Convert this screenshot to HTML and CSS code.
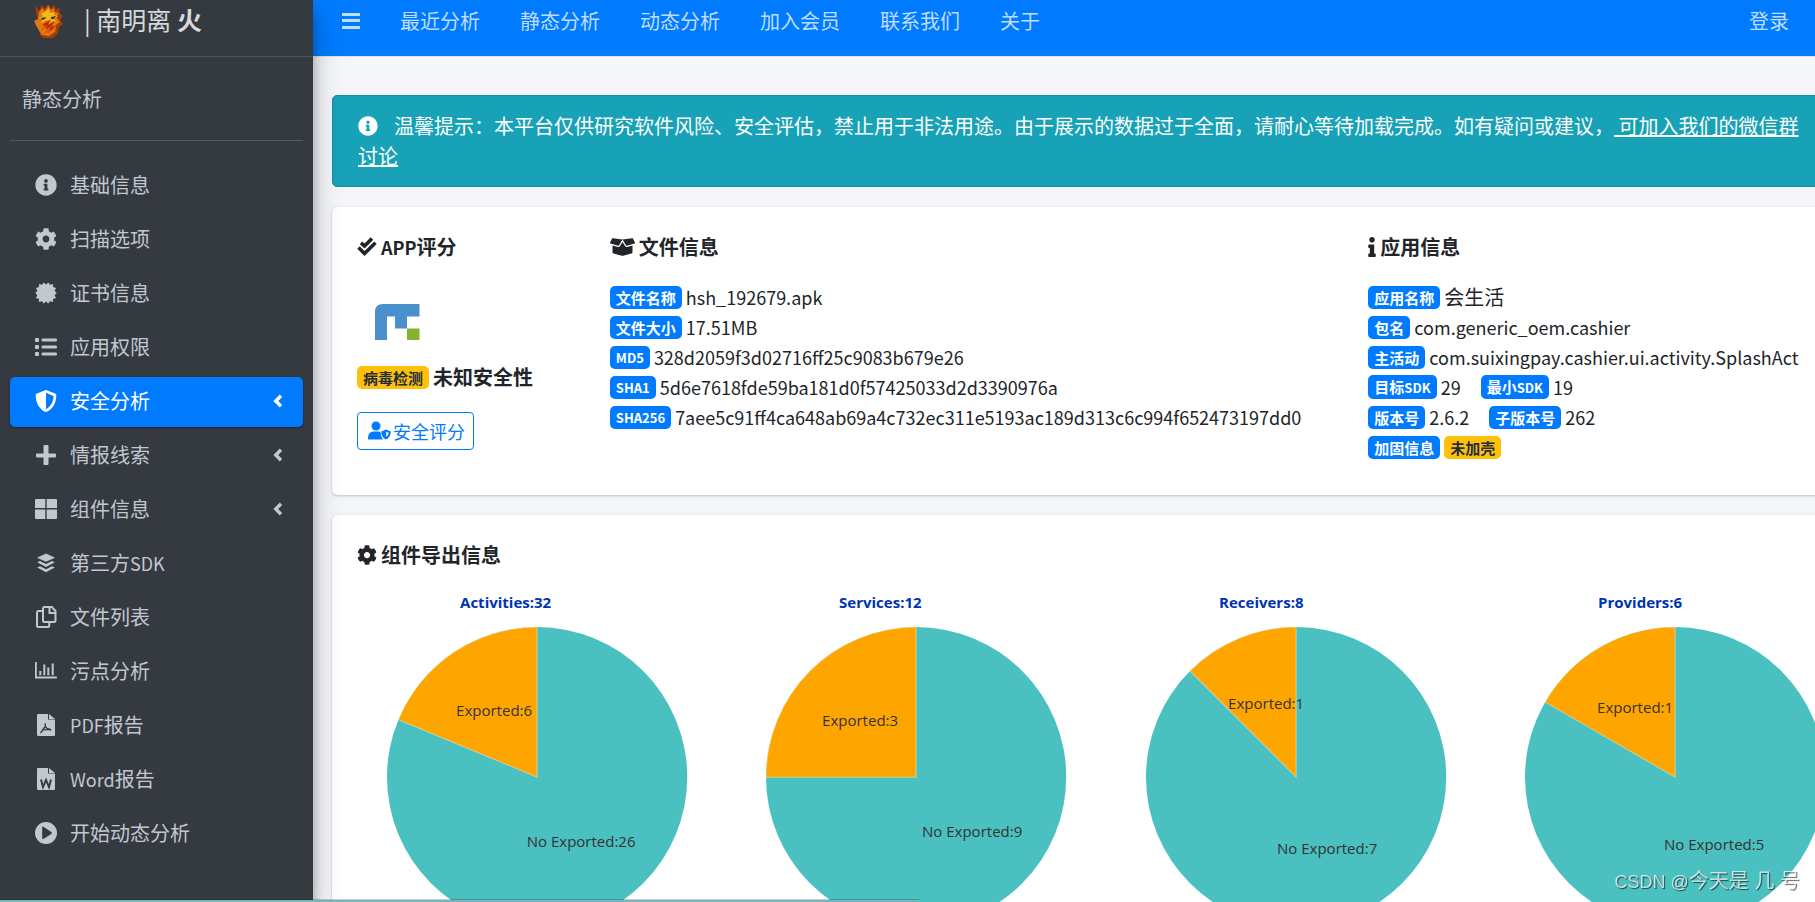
FILE: index.html
```html
<!DOCTYPE html>
<html lang="zh-CN">
<head>
<meta charset="utf-8">
<title>南明离火 - 静态分析</title>
<link rel="stylesheet" href="styles.css">
</head>
<body>
<svg class="sprite" aria-hidden="true">
  <symbol id="i-info" viewBox="0 0 512 512"><path d="M256 8C119.043 8 8 119.083 8 256c0 136.997 111.043 248 248 248s248-111.003 248-248C504 119.083 392.957 8 256 8zm0 110c23.196 0 42 18.804 42 42s-18.804 42-42 42-42-18.804-42-42 18.804-42 42-42zm56 254c0 6.627-5.373 12-12 12h-88c-6.627 0-12-5.373-12-12v-24c0-6.627 5.373-12 12-12h12v-64h-12c-6.627 0-12-5.373-12-12v-24c0-6.627 5.373-12 12-12h64c6.627 0 12 5.373 12 12v100h12c6.627 0 12 5.373 12 12v24z"/></symbol>
  <symbol id="i-cog" viewBox="0 0 512 512"><path d="M487.4 315.7l-42.6-24.6c4.3-23.2 4.3-47 0-70.2l42.6-24.6c4.9-2.8 7.1-8.6 5.5-14-11.1-35.6-30-67.8-54.7-94.6-3.8-4.1-10-5.1-14.8-2.3L380.8 110c-17.9-15.4-38.5-27.3-60.8-35.1V25.8c0-5.6-3.9-10.5-9.4-11.7-36.7-8.2-74.3-7.8-109.2 0-5.5 1.2-9.4 6.1-9.4 11.7V75c-22.2 7.9-42.8 19.8-60.8 35.1L88.7 85.5c-4.9-2.8-11-1.9-14.8 2.3-24.7 26.7-43.6 58.9-54.7 94.6-1.7 5.4.6 11.2 5.5 14L67.3 221c-4.3 23.2-4.3 47 0 70.2l-42.6 24.6c-4.9 2.8-7.1 8.6-5.5 14 11.1 35.6 30 67.8 54.7 94.6 3.8 4.1 10 5.1 14.8 2.3l42.6-24.6c17.9 15.4 38.5 27.3 60.8 35.1v49.2c0 5.6 3.9 10.5 9.4 11.7 36.7 8.2 74.3 7.8 109.2 0 5.5-1.2 9.4-6.1 9.4-11.7v-49.2c22.2-7.9 42.8-19.8 60.8-35.1l42.6 24.6c4.9 2.8 11 1.9 14.8-2.3 24.7-26.7 43.6-58.9 54.7-94.6 1.5-5.5-.7-11.3-5.6-14.1zM256 336c-44.1 0-80-35.9-80-80s35.9-80 80-80 80 35.9 80 80-35.9 80-80 80z"/></symbol>
  <symbol id="i-seal" viewBox="-12 -12 24 24"><path d="M2.500-11.500 4.400-8.900 7.700-9.700 7.700-6.500 11-5.400 9.400-2.500 11.700 0 9.400 2.500 11 5.400 7.700 6.500 7.700 9.700 4.400 8.900 2.500 11.500 0 9.400-2.500 11.500-4.400 8.900-7.700 9.700-7.700 6.500-11 5.400-9.400 2.500-11.700 0-9.400-2.500-11-5.400-7.700-6.500-7.700-9.700-4.400-8.900-2.500-11.500 0-9.400z"/></symbol>
  <symbol id="i-list" viewBox="0 0 22 22"><path d="M1 2h2q1 0 1 1v2q0 1-1 1H1Q0 6 0 5V3q0-1 1-1zM1 9h2q1 0 1 1v2q0 1-1 1H1q-1 0-1-1v-2q0-1 1-1zM1 16h2q1 0 1 1v2q0 1-1 1H1q-1 0-1-1v-2q0-1 1-1zM7.500 2.500h13.500q1 0 1 1.500t-1 1.500H7.500q-1 0-1-1.500t1-1.500zM7.500 9.500h13.500q1 0 1 1.500t-1 1.500H7.500q-1 0-1-1.500t1-1.500zM7.500 16.500h13.500q1 0 1 1.500t-1 1.500H7.500q-1 0-1-1.500t1-1.500z"/></symbol>
  <symbol id="i-shield" viewBox="0 0 512 512"><path d="M466.500 83.700l-192-80a48.150 48.150 0 0 0-36.900 0l-192 80C27.700 91.100 16 108.600 16 128c0 198.500 114.500 335.700 221.500 380.300 11.800 4.900 25.100 4.900 36.900 0C360.100 472.600 496 349.300 496 128c0-19.400-11.700-36.900-29.500-44.300zM256.100 446.300l-.1-381 175.900 73.300c-3.300 151.400-82.100 261.100-175.800 307.700z"/></symbol>
  <symbol id="i-plus" viewBox="0 0 22 22"><path d="M9.500 1h3q1 0 1 1v7.500H20q1 0 1 1v2q0 1-1 1h-6.500V20q0 1-1 1h-3q-1 0-1-1v-6.500H2q-1 0-1-1v-2q0-1 1-1h6.500V2q0-1 1-1z"/></symbol>
  <symbol id="i-grid" viewBox="0 0 22 22"><path d="M1 1h9.300v9H0V2q0-1 1-1zM11.700 1H21q1 0 1 1v8H11.700zM0 11.500h10.300V21H1q-1 0-1-1zM11.700 11.500H22V20q0 1-1 1h-9.300z"/></symbol>
  <symbol id="i-layers" viewBox="0 0 22 22"><path d="M11 1.500 20 5.700 11 9.800 2 5.700z"/><path d="M2.200 10.200 5 9.100 11 12l6-2.900 2.800 1.100L11 15zM2.200 15.500 5 14.300l6 2.900 6-2.900 2.800 1.200L11 20.300z"/></symbol>
  <symbol id="i-copy" viewBox="0 0 22 22"><path d="M9.500 1h7.300L20.500 5v9.500q0 1.500-1.500 1.500H9.500Q8 16 8 14.500v-12Q8 1 9.500 1zM8 5H3.200Q2 5 2 6.500v13Q2 21 3.500 21h9q1.800 0 1.800-1.800V16M14.500 1v6H20" fill="none" stroke="currentColor" stroke-width="2"/></symbol>
  <symbol id="i-chart" viewBox="0 0 22 22"><path d="M.9 2v15.500h21" fill="none" stroke="currentColor" stroke-width="1.800"/><path d="M4.300 11h2v4.200h-2zM8.300 4.500h2v10.700h-2zM12.300 7.500h2v7.700h-2zM16.700 3.500h2v11.700h-2z"/></symbol>
  <symbol id="i-pdf" viewBox="0 0 22 22"><path d="M3 0h10v5.500h7V21q0 1-1 1H3.500Q2 22 2 21V1q0-1 1-1z"/><path d="M14 0l6 5h-6z"/><path d="M10.300 9.200v3.300L5.500 19M10.300 12.500q1.700 3 6 3.500M8 15.800l8-.5" fill="none" stroke="#343a40" stroke-width="1.300"/></symbol>
  <symbol id="i-word" viewBox="0 0 22 22"><path d="M3 0h10v5.500h7V21q0 1-1 1H3.500Q2 22 2 21V1q0-1 1-1z"/><path d="M14 0l6 5h-6z"/><path d="M6 11.500l2 7.500 3-7 3 7 2-7.500" fill="none" stroke="#343a40" stroke-width="1.900"/></symbol>
  <symbol id="i-play" viewBox="0 0 22 22"><path fill-rule="evenodd" d="M11 0a11 11 0 1 0 0 22 11 11 0 0 0 0-22zM7.200 5.500q0-1.300 1.200-.7L16.300 10q1.300 1 0 1.900l-7.900 5q-1.200.6-1.200-.8z"/></symbol>
  <symbol id="i-left" viewBox="0 0 10 14"><path d="M8 1.800 2.800 7 8 12.200" fill="none" stroke="currentColor" stroke-width="3.400"/></symbol>
  <symbol id="i-bars" viewBox="0 0 20 20"><path d="M1 2h18v3H1zM1 8h18v3H1zM1 15h18v3H1z"/></symbol>
  <symbol id="i-checks" viewBox="0 0 20 20"><path d="M4 5.800 7.500 9 15 1.500M1.500 10.500 7.500 16.500 18.500 5.800" fill="none" stroke="currentColor" stroke-width="3.600"/></symbol>
  <symbol id="i-box" viewBox="0 0 640 512"><path d="M425.700 256c-16.900 0-32.800-9-41.400-23.400L320 126l-64.200 106.600c-8.700 14.500-24.600 23.500-41.500 23.500-4.500 0-9-.6-13.300-1.900L64 215v178c0 14.700 10 27.500 24.200 31l216.200 54.100c10.200 2.500 20.900 2.500 31 0L551.800 424c14.200-3.600 24.200-16.400 24.200-31V215l-137 39.100c-4.300 1.300-8.800 1.900-13.300 1.900zm212.600-112.200L586.800 41c-3.100-6.200-9.800-9.800-16.700-8.900L320 64l91.700 152.100c3.800 6.300 11.400 9.300 18.500 7.300l197.900-56.500c9.900-2.900 14.700-13.900 10.200-23.100zM53.200 41L1.700 143.800c-4.600 9.200.3 20.200 10.100 23l197.900 56.500c7.100 2 14.700-1 18.500-7.300L320 64 69.800 32.100c-6.900-.8-13.500 2.700-16.600 8.900z"/></symbol>
  <symbol id="i-i" viewBox="0 0 192 512"><path d="M20 424.229h20V279.771H20c-11.046 0-20-8.954-20-20V212c0-11.046 8.954-20 20-20h112c11.046 0 20 8.954 20 20v212.229h20c11.046 0 20 8.954 20 20V492c0 11.046-8.954 20-20 20H20c-11.046 0-20-8.954-20-20v-47.771c0-11.046 8.954-20 20-20zM96 0C56.235 0 24 32.235 24 72s32.235 72 72 72 72-32.235 72-72S135.764 0 96 0z"/></symbol>
  <symbol id="i-user" viewBox="0 0 23 20"><circle cx="8" cy="5" r="4.500"/><path d="M0 18q-.2-7.500 5.500-7.500h5q1.200 0 2 .5 0 4.500 2.500 7.500H1Q0 18.500 0 18z"/><path fill-rule="evenodd" d="M18 8.500l4.700 1.900q.3 5.600-4.700 8.100-5-2.500-4.700-8.100zM18.200 10.800v5.300q2.400-1.600 2.500-4.300z"/></symbol>
</svg>

<div class="app">
  <aside class="sidebar">
    <a class="brand" href="#">
      <svg class="brand-logo" viewBox="0 0 30 34" aria-hidden="true">
        <path fill="#a63c0c" d="M2 8 1 2l5 5 1-6 4 3 3-4 2 4 5-3 0 5 5-3-1 6 4 3-3 4 3 4-4 3-1 6-5 5-8 1-5-4-1-6-4-5 3-3z"/>
        <path fill="#e07a0c" d="M5 8 8 4l3 3 4-6 1 5 5-2-1 4 5 1-3 4 4 5-4 3-1 7-6 4-7-1-4-6-4-8 4-2z"/>
        <path fill="#eebb1c" d="M7 9l4-1 4-4 1 5 5-1-1 3 4 1-4 3 3 3-5-1-3 3-2-4-6 3 2-4-4-1 4-2z"/>
        <path fill="#c22b0d" d="M8 21l9-6-3 6 7-4-4 6 5-2-7 9-6-1 4-5-6 3 4-5z"/>
        <path fill="#f7b617" d="M9 25l4-4-1 5 5-4-2 5 4-1-5 5-5-2z" opacity=".4"/>
        <path fill="#4d3410" d="M7 14l5-1-1 2-3 1zM17 13l5-1-2 3-3 0z"/>
      </svg>
      <span class="brand-text">| 南明离 <b>火</b></span>
    </a>
    <div class="side-body">
      <div class="side-title"><a href="#">静态分析</a></div>
      <nav class="menu">
        <a href="#"><svg class="ico"><use href="#i-info"/></svg><span>基础信息</span></a>
        <a href="#"><svg class="ico"><use href="#i-cog"/></svg><span>扫描选项</span></a>
        <a href="#"><svg class="ico"><use href="#i-seal"/></svg><span>证书信息</span></a>
        <a href="#"><svg class="ico"><use href="#i-list"/></svg><span>应用权限</span></a>
        <a href="#" class="active"><svg class="ico"><use href="#i-shield"/></svg><span>安全分析</span><svg class="chev"><use href="#i-left"/></svg></a>
        <a href="#"><svg class="ico"><use href="#i-plus"/></svg><span>情报线索</span><svg class="chev"><use href="#i-left"/></svg></a>
        <a href="#"><svg class="ico"><use href="#i-grid"/></svg><span>组件信息</span><svg class="chev"><use href="#i-left"/></svg></a>
        <a href="#"><svg class="ico"><use href="#i-layers"/></svg><span>第三方<span class="latin">SDK</span></span></a>
        <a href="#"><svg class="ico"><use href="#i-copy"/></svg><span>文件列表</span></a>
        <a href="#"><svg class="ico"><use href="#i-chart"/></svg><span>污点分析</span></a>
        <a href="#"><svg class="ico"><use href="#i-pdf"/></svg><span><span class="latin">PDF</span>报告</span></a>
        <a href="#"><svg class="ico"><use href="#i-word"/></svg><span><span class="latin">Word</span>报告</span></a>
        <a href="#"><svg class="ico"><use href="#i-play"/></svg><span>开始动态分析</span></a>
      </nav>
    </div>
  </aside>

  <div class="page">
    <header class="topbar">
      <button class="toggle" type="button" aria-label="菜单"><svg><use href="#i-bars"/></svg></button>
      <nav class="topnav">
        <a href="#">最近分析</a><a href="#">静态分析</a><a href="#">动态分析</a><a href="#">加入会员</a><a href="#">联系我们</a><a href="#">关于</a>
      </nav>
      <a class="login" href="#">登录</a>
    </header>

    <main class="content">
      <div class="alert">
        <svg class="alert-ico"><use href="#i-info"/></svg>温馨提示：本平台仅供研究软件风险、安全评估，禁止用于非法用途。由于展示的数据过于全面，请耐心等待加载完成。如有疑问或建议，<a href="#">&nbsp;可加入我们的微信群讨论</a>
      </div>

      <section class="card summary">
        <div class="score">
          <h2><svg class="h-ico"><use href="#i-checks"/></svg><span><span class="latin">APP</span>评分</span></h2>
          <svg class="app-icon" viewBox="0 0 80 80" aria-hidden="true">
            <path fill="#4a90cd" d="M18 58V30q0-8 8-8h36.500v12.500H50v12H38v-12h-8V58z"/>
            <path fill="#86b32d" d="M50 46.500h12.500V58H50z"/>
          </svg>
          <p class="verdict"><span class="badge warn">病毒检测</span><b>未知安全性</b></p>
          <button class="score-btn" type="button"><svg><use href="#i-user"/></svg>安全评分</button>
        </div>
        <div class="files">
          <h2><svg class="h-ico wide"><use href="#i-box"/></svg><span>文件信息</span></h2>
          <p><span class="badge">文件名称</span><span class="latin">hsh_192679.apk</span></p>
          <p><span class="badge">文件大小</span><span class="latin">17.51MB</span></p>
          <p><span class="badge en">MD5</span><span class="latin">328d2059f3d02716ff25c9083b679e26</span></p>
          <p><span class="badge en">SHA1</span><span class="latin">5d6e7618fde59ba181d0f57425033d2d3390976a</span></p>
          <p><span class="badge en">SHA256</span><span class="latin">7aee5c91ff4ca648ab69a4c732ec311e5193ac189d313c6c994f652473197dd0</span></p>
        </div>
        <div class="info">
          <h2><svg class="h-ico thin"><use href="#i-i"/></svg><span>应用信息</span></h2>
          <p><span class="badge">应用名称</span><span>会生活</span></p>
          <p><span class="badge">包名</span><span class="latin">com.generic_oem.cashier</span></p>
          <p><span class="badge">主活动</span><span class="latin">com.suixingpay.cashier.ui.activity.SplashAct</span></p>
          <p><span class="badge">目标<span class="en">SDK</span></span><span class="latin first">29</span><span class="badge">最小<span class="en">SDK</span></span><span class="latin">19</span></p>
          <p><span class="badge">版本号</span><span class="latin first">2.6.2</span><span class="badge">子版本号</span><span class="latin">262</span></p>
          <p><span class="badge">加固信息</span><span class="badge warn">未加壳</span></p>
        </div>
      </section>

      <section class="card exports">
        <h2><svg class="h-ico"><use href="#i-cog"/></svg><span>组件导出信息</span></h2>
        <div class="charts">
          <svg class="pie" viewBox="0 0 360 360">
            <circle cx="180" cy="197" r="150"/><path d="M180 197V47A150 150 0 0 0 41.400 139.600z"/>
            <text class="pie-title" x="103" y="28">Activities:32</text>
            <text x="137" y="136">Exported:6</text><text x="224" y="267">No Exported:26</text>
          </svg>
          <svg class="pie" viewBox="0 0 360 360">
            <circle cx="180" cy="197" r="150"/><path d="M180 197V47A150 150 0 0 0 30 197z"/>
            <text class="pie-title" x="103" y="28">Services:12</text>
            <text x="124" y="146">Exported:3</text><text x="236" y="257">No Exported:9</text>
          </svg>
          <svg class="pie" viewBox="0 0 360 360">
            <circle cx="180" cy="197" r="150"/><path d="M180 197V47A150 150 0 0 0 73.900 90.900z"/>
            <text class="pie-title" x="103" y="28">Receivers:8</text>
            <text x="150" y="129">Exported:1</text><text x="211" y="274">No Exported:7</text>
          </svg>
          <svg class="pie" viewBox="0 0 360 360">
            <circle cx="180" cy="197" r="150"/><path d="M180 197V47A150 150 0 0 0 50.100 122z"/>
            <text class="pie-title" x="103" y="28">Providers:6</text>
            <text x="140" y="133">Exported:1</text><text x="219" y="270">No Exported:5</text>
          </svg>
        </div>
      </section>
    </main>
  </div>
</div>
<div class="loadbar"></div>
<div class="watermark"><span class="mark-latin">CSDN @</span>今天是 几 号</div>
</body>
</html>
```
FILE: styles.css
```css
* { box-sizing: border-box; }
body {
  margin: 0;
  font: 20px/30px "Noto Sans CJK SC", sans-serif;
  color: #212529;
  background: #f4f6f9;
}
a { color: inherit; text-decoration: none; }
p, h2 { margin: 0; }
svg { fill: currentColor; flex: none; }
button { font: inherit; color: inherit; background: none; border: 0; padding: 0; }
.sprite { position: absolute; width: 0; height: 0; }
.latin { font-size: 18px; }

.app { display: flex; height: 100vh; overflow: hidden; }

/* sidebar */
.sidebar {
  position: relative;
  z-index: 2;
  flex: none;
  width: 313px;
  background: #343a40;
  color: #c2c7d0;
  box-shadow: 0 14px 28px rgba(0,0,0,.25), 0 10px 10px rgba(0,0,0,.22);
}
.brand {
  display: flex;
  align-items: flex-start;
  gap: 20px;
  height: 57px;
  padding: 4px 10px 0 34px;
  border-bottom: 1px solid #4b545c;
  color: #d6d8d9;
}
.brand-logo { width: 30px; height: 34px; }
.brand-text { font-size: 25px; line-height: 30px; }
.side-body { padding: 0 10px; }
.side-title { padding: 27px 12px; height: 84px; border-bottom: 1px solid #4f5962; }
.menu { display: flex; flex-direction: column; gap: 4px; margin-top: 20px; }
.menu a {
  display: flex;
  align-items: center;
  gap: 13px;
  height: 50px;
  padding: 0 20px 2px 25px;
  border-radius: 5px;
}
.menu .active {
  background: #007bff;
  color: #fff;
  box-shadow: 0 1px 3px rgba(0,0,0,.12), 0 1px 2px rgba(0,0,0,.24);
}
.ico { width: 22px; height: 22px; }
.chev { width: 10px; height: 14px; margin-left: auto; }

/* top bar */
.page { flex: 1; min-width: 0; overflow: hidden; }
.topbar {
  display: flex;
  align-items: flex-start;
  height: 57px;
  padding: 6px 26px 0 28px;
  background: #007bff;
  border-bottom: 1px solid #dee2e6;
  color: rgba(255,255,255,.75);
}
.toggle { display: flex; align-items: center; height: 30px; }
.toggle svg { width: 20px; height: 20px; }
.topnav { display: flex; gap: 40px; margin-left: 39px; }
.login { margin-left: auto; }

/* the content column runs on past the right edge of the window */
.content {
  display: flex;
  flex-direction: column;
  gap: 20px;
  margin: 38px -65px 0 19px;
}
.alert {
  padding: 15px 72px 15px 25px;
  border: 1px solid #148ea1;
  border-radius: 5px;
  background: #17a2b8;
  color: #fff;
}
.alert a { text-decoration: underline; }
.alert-ico { width: 20px; height: 20px; margin-right: 16px; vertical-align: -2px; }
.card {
  padding: 25px;
  border-radius: 5px;
  background: #fff;
  box-shadow: 0 0 1px rgba(0,0,0,.13), 0 1px 3px rgba(0,0,0,.2);
}
h2 {
  display: flex;
  align-items: center;
  gap: 4px;
  font-size: 20px;
  line-height: 30px;
  font-weight: 700;
}
.h-ico { width: 20px; height: 20px; }
.h-ico.wide { width: 25px; }
.h-ico.thin { width: 8px; }

.summary { display: grid; grid-template-columns: repeat(12, 1fr); column-gap: 19px; padding-bottom: 33px; }
.summary h2 { margin-bottom: 20px; }
.score { grid-column: span 2; }
.files { grid-column: span 6; }
.info { grid-column: span 4; }
.summary p { display: flex; align-items: center; gap: 4px; height: 30px; white-space: nowrap; }
.first { margin-right: 16px; }
.badge {
  padding: 0 6px;
  border-radius: 5px;
  background: #007bff;
  color: #fff;
  font-size: 15px;
  line-height: 23px;
  font-weight: 700;
}
.badge.warn { background: #ffc107; color: #1f2d3d; }
.en, .badge.en { font-size: 13px; }
.app-icon { display: block; width: 80px; height: 80px; }
.score-btn {
  display: flex;
  align-items: center;
  gap: 2px;
  height: 38px;
  margin-top: 20px;
  padding: 0 8px 0 10px;
  border: 1px solid #007bff;
  border-radius: 4px;
  color: #007bff;
  font-size: 18px;
}
.score-btn svg { width: 23px; height: 20px; }

.charts { display: grid; grid-template-columns: repeat(4, 1fr); gap: 19px; margin-top: 10px; }
.pie { width: 100%; }
.pie circle { fill: #4bc0c0; }
.pie path { fill: #ffa500; stroke: rgba(255,255,255,.4); }
.pie text { font: 15px "Open Sans", sans-serif; fill: #333; text-anchor: middle; }
.pie .pie-title { font-weight: 700; fill: #0033b4; text-anchor: start; }

.loadbar {
  position: fixed;
  z-index: 3;
  left: 0;
  bottom: 0;
  width: 919px;
  height: 2px;
  background: #78b4bd;
  box-shadow: 0 -1px 0 rgba(0,0,0,.2);
}
.watermark {
  position: fixed;
  z-index: 3;
  right: 15px;
  bottom: 5px;
  font: 20px/30px "Liberation Sans", "Noto Sans CJK SC", sans-serif;
  color: rgba(255,255,255,.7);
  text-shadow: 1px 1px 1px rgba(0,0,0,.6);
}
.mark-latin { font-size: 18px; }
```
